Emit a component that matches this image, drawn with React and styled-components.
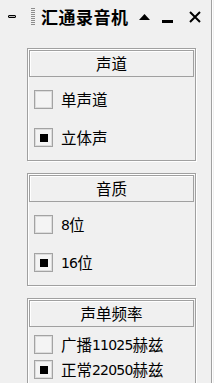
import React, { useState } from "react";
import styled, { createGlobalStyle } from "styled-components";

const GlobalStyle = createGlobalStyle`
  html, body {
    margin: 0;
    padding: 0;
    background: #f0f0f0;
  }
  body {
    font-family: "Noto Sans CJK SC", "DejaVu Sans", sans-serif;
    color: #000;
  }
`;

const Window = styled.div`
  width: 211px;
  height: 383px;
  border-right: 1px solid #a0a0a0;
  box-shadow: 1px 0 0 #fff;
  overflow: hidden;
  background: #f0f0f0;
`;

const TitleBar = styled.div`
  height: 33px;
  display: flex;
  align-items: center;
  padding: 0 0 0 8px;
`;

const Collapse = styled.span`
  width: 6px;
  height: 1px;
  border: 1px solid #000;
  border-radius: 1px;
  background: #bbb;
  margin-right: 15px;
`;

const Grip = styled.span`
  width: 4px;
  height: 18px;
  margin-right: 6px;
  background: repeating-linear-gradient(
    to bottom,
    #8c8c8c 0 1px,
    transparent 1px 2px
  );
`;

const Title = styled.div`
  font-size: 17px;
  font-weight: bold;
  letter-spacing: 0.5px;
  flex: 1;
  line-height: 1;
`;

const TitleButton = styled.span`
  width: ${(p) => p.w}px;
  display: flex;
  justify-content: center;
  align-items: center;
`;

const Content = styled.div`
  padding: 15px 0 0 27px;
  display: flex;
  flex-direction: column;
  gap: 12px;
`;

const Panel = styled.div`
  width: 167px;
  border: 1px solid #a0a0a0;
  box-shadow: 1px 1px 0 #fff, inset 1px 1px 0 #fff;
`;

const Header = styled.div`
  margin: 1px;
  height: 25px;
  border: 1px solid #a0a0a0;
  box-shadow: inset 1px 1px 0 #fff;
  display: flex;
  justify-content: center;
  align-items: center;
  font-size: 15.5px;
  line-height: 1;
`;

const Body = styled.div`
  display: flex;
  flex-direction: column;
  padding: ${(p) => (p.dense ? "7px 0 8px" : "12px 0 13px")};
  gap: ${(p) => (p.dense ? "6px" : "19px")};
`;

const Row = styled.label`
  display: flex;
  align-items: center;
  padding-left: 6px;
  font-size: 15.5px;
  line-height: 1;
  cursor: default;
`;

const Box = styled.span`
  width: 17px;
  height: 17px;
  border: 1px solid #a3a3a3;
  box-shadow: inset 0 0 0 1px #dcdcdc;
  background: #f4f4f4;
  margin-right: 8px;
  display: flex;
  justify-content: center;
  align-items: center;
  flex-shrink: 0;
`;

const Mark = styled.span`
  width: 8px;
  height: 8px;
  background: #000;
`;

const Latin = styled.span`
  font-family: "DejaVu Sans", sans-serif;
  font-size: 14px;
  letter-spacing: -0.8px;
`;

const groups = [
  { title: "声道", items: [["单声道"], ["立体声"]], checked: 1 },
  { title: "音质", items: [["", "8", "位"], ["", "16", "位"]], checked: 1 },
  {
    title: "声单频率",
    items: [["广播", "11025", "赫兹"], ["正常", "22050", "赫兹"]],
    checked: 1,
    dense: true,
  },
];

function Group({ group }) {
  const [checked, setChecked] = useState(group.checked);
  return (
    <Panel>
      <Header>{group.title}</Header>
      <Body dense={group.dense}>
        {group.items.map((parts, i) => (
          <Row key={i} onClick={() => setChecked(i)}>
            <Box>{checked === i && <Mark />}</Box>
            {parts[0]}
            {parts[1] && <Latin>{parts[1]}</Latin>}
            {parts[2]}
          </Row>
        ))}
      </Body>
    </Panel>
  );
}

export default function App() {
  return (
    <>
      <GlobalStyle />
      <Window>
        <TitleBar>
          <Collapse />
          <Grip />
          <Title>汇通录音机</Title>
          <TitleButton w={22}>
            <svg width="11" height="6" viewBox="0 0 11 6">
              <path d="M0 6 L5.5 0 L11 6 Z" fill="#000" />
            </svg>
          </TitleButton>
          <TitleButton w={24}>
            <svg width="11" height="14" viewBox="0 0 11 14">
              <rect x="0" y="10" width="11" height="3" fill="#000" />
            </svg>
          </TitleButton>
          <TitleButton w={32}>
            <svg width="12" height="12" viewBox="0 0 12 12">
              <path d="M1 1 L11 11 M11 1 L1 11" stroke="#000" strokeWidth="2" />
            </svg>
          </TitleButton>
        </TitleBar>
        <Content>
          {groups.map((g) => (
            <Group key={g.title} group={g} />
          ))}
        </Content>
      </Window>
    </>
  );
}
